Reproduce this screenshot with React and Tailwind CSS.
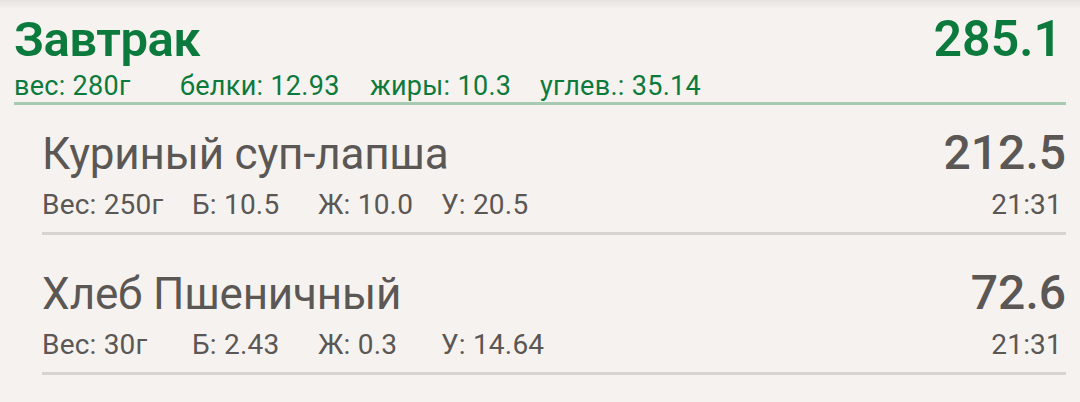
import React from 'react';

const meal = {
  title: 'Завтрак',
  kcal: '285.1',
  stats: [
    { label: 'вес: 280г', w: 'w-[166px]' },
    { label: 'белки: 12.93', w: 'w-[190px]' },
    { label: 'жиры: 10.3', w: 'w-[170px]' },
    { label: 'углев.: 35.14', w: '' },
  ],
};

const items = [
  {
    id: 1,
    name: 'Куриный суп-лапша',
    kcal: '212.5',
    weight: 'Вес: 250г',
    p: 'Б: 10.5',
    f: 'Ж: 10.0',
    c: 'У: 20.5',
    time: '21:31',
  },
  {
    id: 2,
    name: 'Хлеб Пшеничный',
    kcal: '72.6',
    weight: 'Вес: 30г',
    p: 'Б: 2.43',
    f: 'Ж: 0.3',
    c: 'У: 14.64',
    time: '21:31',
  },
];

const FoodRow = ({ item, first }) => (
  <div className={`pl-[42px] pr-[14px] ${first ? 'pt-[24px]' : 'pt-[34px]'}`}>
    <div className="flex items-baseline justify-between">
      <span className="text-[44px] leading-none tracking-[-0.2px] text-[#5a5755]">{item.name}</span>
      <span className="text-[48px] leading-none font-medium text-[#5a5755]">{item.kcal}</span>
    </div>
    <div className="mt-[14px] flex items-baseline text-[28px] leading-none tracking-[0.2px] text-[#5a5755]">
      <span className="w-[150px]">{item.weight}</span>
      <span className="w-[126px]">{item.p}</span>
      <span className="w-[123px]">{item.f}</span>
      <span className="flex-1">{item.c}</span>
      <span className="pr-[4px]">{item.time}</span>
    </div>
    <div className="mt-[13px] h-[3px] bg-[#d6d3d1]" />
  </div>
);

export default function App() {
  return (
    <div className="h-[402px] w-full overflow-hidden bg-[#f6f2ef] bg-[linear-gradient(to_bottom,#e6e3e0,#f6f2ef_9px)] font-['Roboto',sans-serif]">
      {/* Meal header */}
      <div className="px-[14px] pt-[14px]">
        <div className="flex items-baseline justify-between pr-[4px]">
          <span className="text-[49px] leading-none font-semibold tracking-[-0.5px] text-[#0c7a3d]">{meal.title}</span>
          <span className="text-[50px] leading-none font-semibold text-[#0c7a3d]">{meal.kcal}</span>
        </div>
        <div className="mt-[9px] flex items-baseline text-[27px] leading-none tracking-[0.3px] text-[#0c7a3d]">
          {meal.stats.map((s) => (
            <span key={s.label} className={s.w}>{s.label}</span>
          ))}
        </div>
        <div className="mt-[2px] h-[3px] bg-[#a7cab2]" />
      </div>

      {items.map((item, i) => (
        <FoodRow key={item.id} item={item} first={i === 0} />
      ))}
    </div>
  );
}
